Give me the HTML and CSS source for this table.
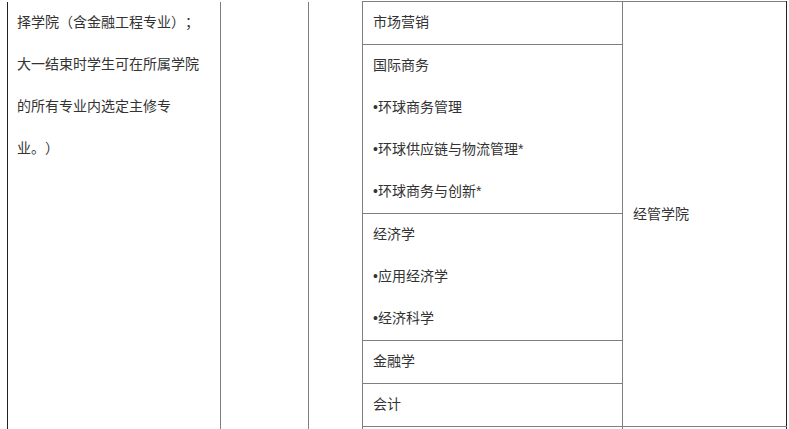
FILE: index.html
```html
<!DOCTYPE html>
<html lang="zh-CN">
<head>
    <meta charset="utf-8">
    <title>专业设置</title>
    <link rel="stylesheet" href="styles.css">
</head>
<body>
    <table class="plan">
        <colgroup>
            <col class="col-info">
            <col class="col-blank">
            <col class="col-blank2">
            <col class="col-major">
            <col class="col-school">
        </colgroup>
        <tr>
            <td class="info" rowspan="6"><p>择学院（含金融工程专业）；大一结束时学生可在所属学院的所有专业内选定主修专业。）</p></td>
            <td class="blank" rowspan="6"></td>
            <td class="blank" rowspan="6"></td>
            <td class="major"><p>市场营销</p></td>
            <td class="school" rowspan="5">经管学院</td>
        </tr>
        <tr>
            <td class="major">
                <p>国际商务</p>
                <p>•环球商务管理</p>
                <p>•环球供应链与物流管理*</p>
                <p>•环球商务与创新*</p>
            </td>
        </tr>
        <tr>
            <td class="major">
                <p>经济学</p>
                <p>•应用经济学</p>
                <p>•经济科学</p>
            </td>
        </tr>
        <tr>
            <td class="major"><p>金融学</p></td>
        </tr>
        <tr>
            <td class="major"><p>会计</p></td>
        </tr>
        <tr>
            <td class="major next"></td>
            <td class="school next"></td>
        </tr>
    </table>
</body>
</html>
```

FILE: styles.css
```css
body{
    margin: 1px 0 0 7px;
    background-color: #ffffff;
    font-family: "Liberation Sans", "Noto Sans CJK SC", sans-serif;
    font-size: 14px;
    color: #333333;
    text-spacing-trim: space-all;
}
.plan{
    border-collapse: collapse;
    table-layout: fixed;
    width: 779px;
}
.col-info{
    width: 213px;
}
.col-blank{
    width: 88px;
}
.col-blank2{
    width: 54px;
}
.col-major{
    width: 260px;
}
.col-school{
    width: 164px;
}
.plan td{
    border: 1px solid #7f7f7f;
    padding: 0 10px;
    line-height: 42px;
    vertical-align: top;
}
.plan p{
    margin: 0;
    position: relative;
    top: -1px;
}
.plan td.info{
    border-top: none;
    border-left-color: #222222;
    padding-left: 9px;
}
.plan td.blank{
    border-top: none;
}
.plan td.school{
    vertical-align: middle;
    border-right-color: #222222;
}
.plan td.next{
    height: 40px;
}
```
